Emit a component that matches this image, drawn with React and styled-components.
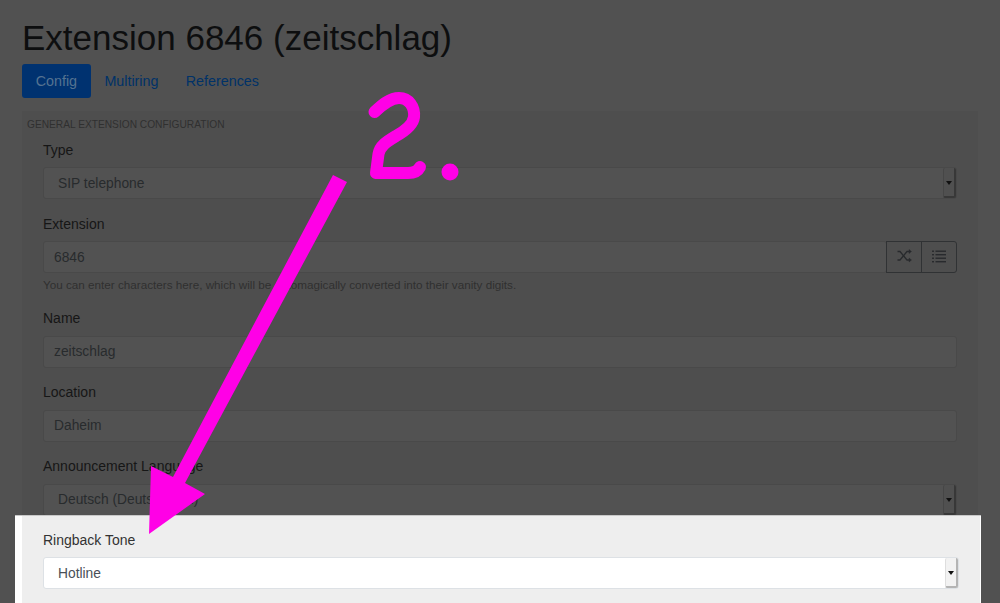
import React from 'react';
import styled, { createGlobalStyle } from 'styled-components';

const GlobalStyle = createGlobalStyle`
  html, body {
    margin: 0;
    padding: 0;
    background: #515151;
  }
  * {
    box-sizing: border-box;
  }
`;

const Page = styled.div`
  position: relative;
  width: 1000px;
  height: 603px;
  overflow: hidden;
  padding: 18px 22px 0;
  background: #515151;
  font-family: "Liberation Sans", Arial, sans-serif;
`;

const Title = styled.h1`
  margin: 0 0 6px;
  font-size: 35px;
  line-height: 40px;
  font-weight: 400;
  color: #0d0e0f;
`;

const Tabs = styled.nav`
  display: flex;
  height: 34px;
  margin-bottom: 13px;
`;

const Tab = styled.a`
  display: flex;
  align-items: center;
  padding: 0 13.7px;
  border-radius: 3px;
  font-size: 14.3px;
  color: ${(p) => (p.$active ? '#557290' : '#003268')};
  background: ${(p) => (p.$active ? '#003270' : 'transparent')};
`;

const Fieldset = styled.section`
  width: 956px;
  padding: 7px 0 0;
  background: #4e4e4e;
`;

const Legend = styled.div`
  height: 14px;
  margin: 0 0 9px 5px;
  font-size: 10.2px;
  line-height: 14px;
  color: #303030;
  text-transform: uppercase;
`;

const Group = styled.div`
  padding: 0 21px ${(p) => (p.$tight ? '15px' : '16px')};
`;

const Highlight = styled.div`
  width: 966px;
  height: 100px;
  margin: -16px 0 0 -7px;
  padding: 15.5px 1px 0 7px;
  position: relative;
  background: #fff;
  border-top: 1px solid #c8c8c8;

  &::before {
    content: '';
    position: absolute;
    inset: 0 1px 0 7px;
    background: #eee;
  }

  ${Group} {
    position: relative;
  }
`;

const Label = styled.label`
  display: block;
  height: 19px;
  margin-bottom: ${(p) => (p.$wide ? '8px' : '7px')};
  font-size: 14px;
  line-height: 19px;
  color: ${(p) => (p.$lit ? '#333' : '#161616')};
`;

const Field = styled.div`
  display: flex;
  align-items: center;
  flex: 1;
  height: 32px;
  padding-left: ${(p) => (p.$select ? '14px' : '10px')};
  border: 1px solid ${(p) => (p.$lit ? '#dde1e5' : '#494949')};
  border-radius: 3px;
  background: ${(p) => (p.$lit ? '#fff' : '#525252')};
  font-size: 13.8px;
  color: ${(p) => (p.$lit ? '#495057' : '#282b2d')};
`;

const FieldText = styled.span`
  flex: 1;
`;

const Arrow = styled.span`
  position: relative;
  flex: none;
  width: 13px;
  height: 30px;
  border-radius: 2px;
  background: ${(p) => (p.$lit ? '#f2f2f2' : '#505050')};
  border-left: 1px solid ${(p) => (p.$lit ? '#dedede' : '#464646')};
  border-right: 2px solid ${(p) => (p.$lit ? '#b4b4b4' : '#383838')};
  border-bottom: 2px solid ${(p) => (p.$lit ? '#b4b4b4' : '#383838')};

  &::after {
    content: '';
    position: absolute;
    left: 2px;
    top: 13px;
    border: 3.5px solid transparent;
    border-bottom: 0;
    border-top: 4px solid #111;
  }
`;

const InputRow = styled.div`
  display: flex;
`;

const AddonButton = styled.button`
  display: flex;
  align-items: center;
  justify-content: center;
  width: 36px;
  height: 32px;
  padding: 0 0 2px;
  margin-left: -1px;
  border: 1px solid #303234;
  border-radius: ${(p) => (p.$last ? '0 3px 3px 0' : '0')};
  background: transparent;
  color: #282a2d;
`;

const Help = styled.small`
  display: block;
  height: 19.5px;
  padding-top: 5px;
  font-size: 11.7px;
  line-height: 14px;
  color: #303030;
`;

const Annotation = styled.svg`
  position: absolute;
  left: 0;
  top: 0;
  pointer-events: none;
`;

const ShuffleIcon = () => (
  <svg width="15" height="14" viewBox="0 0 15 14" fill="none" stroke="currentColor" strokeWidth="1.3">
    <path d="M0.5 2.5 H3 L10 11 H12.5" />
    <path d="M0.5 11 H3 L10 2.5 H12.5" />
    <path d="M12 0.5 L14.5 2.5 L12 4.5 Z" fill="currentColor" strokeWidth="0.4" />
    <path d="M12 9 L14.5 11 L12 13 Z" fill="currentColor" strokeWidth="0.4" />
  </svg>
);

const ListIcon = () => (
  <svg width="14" height="13" viewBox="0 0 14 13" fill="currentColor">
    <rect x="0" y="0.5" width="2" height="1.4" />
    <rect x="3.5" y="0.5" width="10.5" height="1.4" />
    <rect x="0" y="4" width="2" height="1.4" />
    <rect x="3.5" y="4" width="10.5" height="1.4" />
    <rect x="0" y="7.5" width="2" height="1.4" />
    <rect x="3.5" y="7.5" width="10.5" height="1.4" />
    <rect x="0" y="11" width="2" height="1.4" />
    <rect x="3.5" y="11" width="10.5" height="1.4" />
  </svg>
);

const App = () => {
  return (
    <Page>
      <GlobalStyle />
      <Title>Extension 6846 (zeitschlag)</Title>
      <Tabs>
        <Tab $active>Config</Tab>
        <Tab>Multiring</Tab>
        <Tab>References</Tab>
      </Tabs>
      <Fieldset>
        <Legend>General Extension Configuration</Legend>
        <Group>
          <Label>Type</Label>
          <InputRow>
            <Field $select>
              <FieldText>SIP telephone</FieldText>
              <Arrow />
            </Field>
          </InputRow>
        </Group>
        <Group>
          <Label>Extension</Label>
          <InputRow>
            <Field>
              <FieldText>6846</FieldText>
            </Field>
            <AddonButton>
              <ShuffleIcon />
            </AddonButton>
            <AddonButton $last>
              <ListIcon />
            </AddonButton>
          </InputRow>
          <Help>You can enter characters here, which will be automagically converted into their vanity digits.</Help>
        </Group>
        <Group $tight>
          <Label $wide>Name</Label>
          <InputRow>
            <Field>
              <FieldText>zeitschlag</FieldText>
            </Field>
          </InputRow>
        </Group>
        <Group $tight>
          <Label $wide>Location</Label>
          <InputRow>
            <Field>
              <FieldText>Daheim</FieldText>
            </Field>
          </InputRow>
        </Group>
        <Group $tight>
          <Label $wide>Announcement Language</Label>
          <InputRow>
            <Field $select>
              <FieldText>Deutsch (Deutschland)</FieldText>
              <Arrow />
            </Field>
          </InputRow>
        </Group>
        <Highlight>
          <Group>
            <Label $lit>Ringback Tone</Label>
            <InputRow>
              <Field $select $lit>
                <FieldText>Hotline</FieldText>
                <Arrow $lit />
              </Field>
            </InputRow>
          </Group>
        </Highlight>
      </Fieldset>
      <Annotation width="1000" height="603" viewBox="0 0 1000 603">
        <path
          d="M374.5 112 C382 105 390 98 399 98 C409 98 415 107 414 117 C413 125 405 131 396 136 C386 142 380 146 378.5 154 L376 173 L408 173 C414 173 418 171 420 167"
          fill="none"
          stroke="#ff00e6"
          strokeWidth="12"
          strokeLinecap="round"
          strokeLinejoin="round"
        />
        <circle cx="450" cy="172" r="8.5" fill="#ff00e6" />
        <polygon points="333,175 347,182 185,483 205,494 149,534 151,466 173,477" fill="#ff00e6" />
      </Annotation>
    </Page>
  );
};

export default App;
